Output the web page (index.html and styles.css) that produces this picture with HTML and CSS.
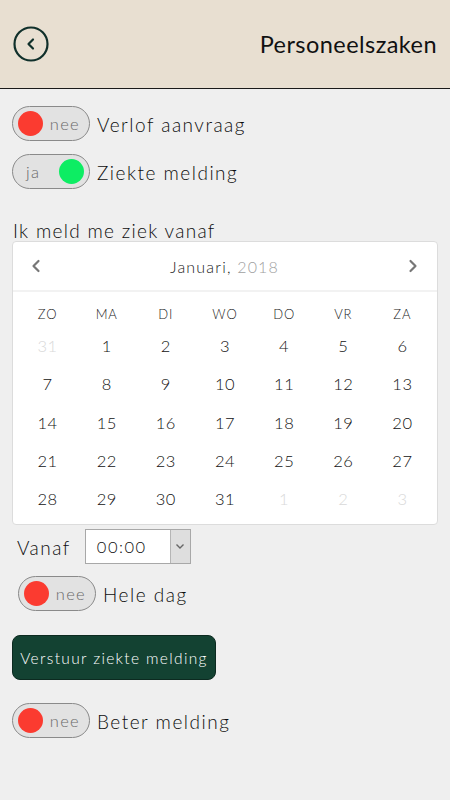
FILE: index.html
```html
<!DOCTYPE html>
<html lang="nl">
<head>
<meta charset="utf-8">
<title>Personeelszaken</title>
<link rel="stylesheet" href="styles.css">
</head>
<body>
<header class="topbar">
  <button class="back" aria-label="Terug">
    <svg width="38" height="38" viewBox="0 0 38 38"><circle cx="19" cy="19" r="16.5" fill="none" stroke="#10302b" stroke-width="2.2"/><path d="M21 14.5 L16.5 19 L21 23.5" fill="none" stroke="#10302b" stroke-width="2.2" stroke-linecap="round" stroke-linejoin="round"/></svg>
  </button>
  <h1 class="title">Personeelszaken</h1>
</header>
<main class="content">
  <div class="row">
    <span class="toggle off"><span class="knob"></span><span class="tlabel">nee</span></span>
    <span class="label">Verlof aanvraag</span>
  </div>
  <div class="row row-2">
    <span class="toggle on"><span class="tlabel">ja</span><span class="knob"></span></span>
    <span class="label">Ziekte melding</span>
  </div>
  <p class="intro">Ik meld me ziek vanaf</p>
  <section class="calendar">
    <div class="cal-head">
      <svg class="chev" width="12" height="14" viewBox="0 0 12 14"><path d="M8.5 2 L3.5 7 L8.5 12" fill="none" stroke="#777" stroke-width="2.2" stroke-linecap="round" stroke-linejoin="round"/></svg>
      <span class="month">Januari, <span class="year">2018</span></span>
      <svg class="chev" width="12" height="14" viewBox="0 0 12 14"><path d="M3.5 2 L8.5 7 L3.5 12" fill="none" stroke="#777" stroke-width="2.2" stroke-linecap="round" stroke-linejoin="round"/></svg>
    </div>
    <div class="grid">
      <span class="wd">ZO</span><span class="wd">MA</span><span class="wd">DI</span><span class="wd">WO</span><span class="wd">DO</span><span class="wd">VR</span><span class="wd">ZA</span>
      <span class="d muted">31</span><span class="d">1</span><span class="d">2</span><span class="d">3</span><span class="d">4</span><span class="d">5</span><span class="d">6</span>
      <span class="d">7</span><span class="d">8</span><span class="d">9</span><span class="d">10</span><span class="d">11</span><span class="d">12</span><span class="d">13</span>
      <span class="d">14</span><span class="d">15</span><span class="d">16</span><span class="d">17</span><span class="d">18</span><span class="d">19</span><span class="d">20</span>
      <span class="d">21</span><span class="d">22</span><span class="d">23</span><span class="d">24</span><span class="d">25</span><span class="d">26</span><span class="d">27</span>
      <span class="d">28</span><span class="d">29</span><span class="d">30</span><span class="d">31</span><span class="d muted">1</span><span class="d muted">2</span><span class="d muted">3</span>
    </div>
  </section>
  <div class="time-row">
    <span class="label">Vanaf</span>
    <span class="select"><span class="sval">00:00</span><span class="sarrow"><svg width="10" height="7" viewBox="0 0 10 7"><path d="M1.5 1.5 L5 5 L8.5 1.5" fill="none" stroke="#666" stroke-width="1.4"/></svg></span></span>
  </div>
  <div class="row row-3">
    <span class="toggle off"><span class="knob"></span><span class="tlabel">nee</span></span>
    <span class="label">Hele dag</span>
  </div>
  <button class="submit">Verstuur ziekte melding</button>
  <div class="row row-4">
    <span class="toggle off"><span class="knob"></span><span class="tlabel">nee</span></span>
    <span class="label">Beter melding</span>
  </div>
</main>
</body>
</html>
```
FILE: styles.css
```css
* { box-sizing: border-box; }
html, body { margin: 0; padding: 0; }
body {
  width: 450px;
  min-height: 800px;
  background: #efefef;
  font-family: "Lato", "Liberation Sans", sans-serif;
  font-weight: 300;
  color: #0d0d0d;
}
.topbar {
  height: 89px;
  background: #e8dfd1;
  border-bottom: 1px solid #1a1a1a;
  display: flex;
  align-items: center;
  justify-content: space-between;
  padding: 0 13px 0 12px;
}
.back {
  border: 0;
  background: none;
  padding: 0;
  width: 38px;
  height: 38px;
  display: flex;
}
.title {
  margin: 0;
  font-weight: 400;
  font-size: 23.5px;
  letter-spacing: 0.45px;
  color: #111;
}
.content { padding: 17px 12px 0 12px; }
.row {
  display: flex;
  align-items: center;
  gap: 7px;
}
.row-2 { margin-top: 13px; }
.row-3 { margin-top: 12px; padding-left: 6px; }
.row-4 { margin-top: 23px; }
.label {
  font-size: 19px;
  letter-spacing: 1.5px;
  color: #0d0d0d;
  padding-top: 2px;
}
.toggle {
  width: 78px;
  height: 35px;
  border: 1px solid #8a8a8a;
  border-radius: 18px;
  background: #e2e2e2;
  display: flex;
  align-items: center;
  justify-content: space-between;
  padding: 0 5px;
  flex: none;
}
.knob {
  width: 25px;
  height: 25px;
  border-radius: 50%;
  background: #fb3b30;
}
.on .knob { background: #0ded63; }
.tlabel {
  font-size: 16.5px;
  color: #6a6a6a;
  letter-spacing: 1.3px;
}
.off .tlabel { padding-right: 4px; }
.on .tlabel { padding-left: 8px; }
.intro {
  margin: 31px 0 0 1px;
  font-size: 19px;
  letter-spacing: 1.3px;
  line-height: 21px;
}
.calendar {
  margin-top: 0;
  background: #fff;
  border: 1px solid #dcdcdc;
  border-radius: 4px;
}
.cal-head {
  height: 50px;
  border-bottom: 2px solid #f2f2f2;
  display: flex;
  align-items: center;
  justify-content: space-between;
  padding: 0 18px 0 17px;
}
.month {
  font-size: 16px;
  letter-spacing: 1.2px;
  color: #222;
}
.year { color: #a0a0a0; }
.grid {
  display: grid;
  grid-template-columns: repeat(7, 1fr);
  grid-template-rows: 26px repeat(5, 38.3px);
  padding: 9px 5px 6px;
}
.grid span {
  display: flex;
  align-items: center;
  justify-content: center;
}
.wd {
  font-size: 13px;
  letter-spacing: 0.9px;
  color: #222;
}
.d {
  font-size: 16.5px;
  letter-spacing: 0.5px;
  color: #111;
}
.d.muted { color: #d9d9d9; }
.time-row {
  display: flex;
  align-items: center;
  gap: 14px;
  margin-top: 4px;
  padding-left: 5px;
}
.select {
  width: 106px;
  height: 35px;
  border: 1px solid #a8a8a8;
  background: #fff;
  display: flex;
}
.sval {
  flex: 1;
  display: flex;
  align-items: center;
  padding-left: 11px;
  font-size: 16.5px;
  letter-spacing: 1.5px;
  color: #0d0d0d;
}
.sarrow {
  width: 20px;
  background: #dedede;
  border-left: 1px solid #b5b5b5;
  display: flex;
  align-items: center;
  justify-content: center;
}
.submit {
  margin-top: 24px;
  display: block;
  width: 204px;
  height: 45px;
  border: 1px solid #0c2a20;
  border-radius: 8px;
  background: #134232;
  color: #ffffff;
  font-family: "Lato", "Liberation Sans", sans-serif;
  font-weight: 300;
  font-size: 15.5px;
  letter-spacing: 1.35px;
  padding: 0;
}
```
